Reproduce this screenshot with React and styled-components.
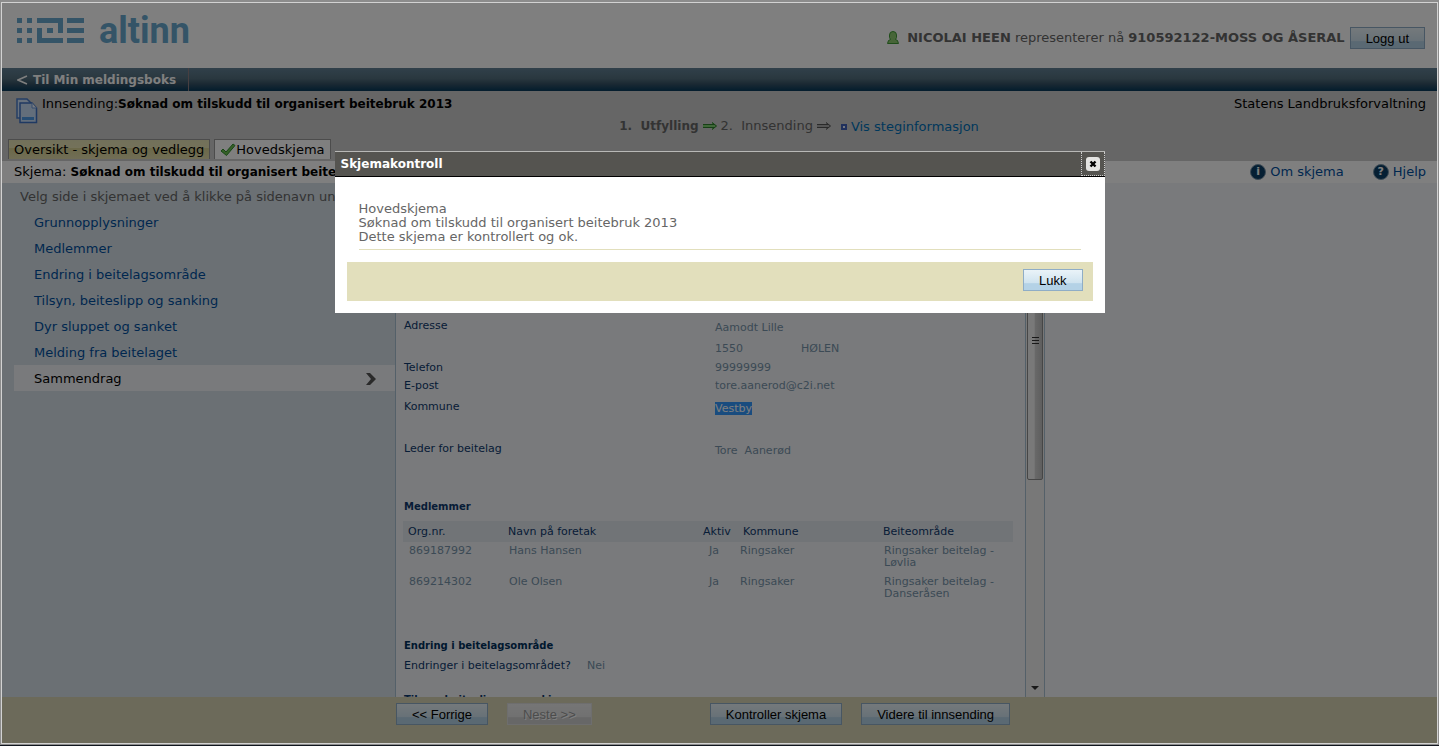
import React from "react";
import styled, { createGlobalStyle, css } from "styled-components";

const GlobalStyle = createGlobalStyle`
  * {
    box-sizing: border-box;
  }

  body {
    margin: 0;
    background: #11161f;
    color: #000;
    font-family: Verdana, "DejaVu Sans", sans-serif;
    font-size: 13px;
    line-height: 16px;
  }

  a {
    color: #004f9f;
    text-decoration: none;
  }

  b {
    font-size: 12px;
  }

  ul, ol, dl, dd, h1, h2, p {
    margin: 0;
    padding: 0;
    list-style: none;
    font-size: inherit;
  }
`;

const Window = styled.div`
  display: flex;
  height: 100vh;
  padding: 2px 1px 1px;
  background: #8c8c8c;
  border-bottom: 1px solid #11161f;
`;

const Page = styled.div`
  position: relative;
  display: flex;
  flex-direction: column;
  flex: 1;
  min-width: 0;
  border: 1px solid #d2d2d2;
  background: #f2f4f8;
`;

const Header = styled.header`
  display: flex;
  align-items: center;
  justify-content: space-between;
  height: 65px;
  padding: 0 12px 0 15px;
  background: #fff;
`;

const Logo = styled.a`
  display: flex;
  align-items: center;
  gap: 14px;
  padding-bottom: 10px;
  color: #68a8cf;
  font: bold 36px/36px Roboto, sans-serif;
`;

const User = styled.div`
  display: flex;
  align-items: center;
  color: #666;
  padding-top: 4px;

  b {
    font-size: 13px;
  }

  svg {
    margin-right: 8px;
  }

  button {
    margin-left: 5px;
  }
`;

const Button = styled.button`
  height: 22px;
  padding: 2px 15px 0;
  border: 1px solid #8fadc6;
  background: linear-gradient(#eaf3f8, #cfe3ef 65%, #b4d2e6 68%, #b4d2e6);
  color: #000;
  font: 13px/18px Arial, "Liberation Sans", sans-serif;
  white-space: nowrap;

  &:disabled {
    border-color: #dcdcdc;
    background: linear-gradient(#ececec, #e2e2e2 65%, #cfcfcf 68%, #cfcfcf);
    color: #999;
    text-shadow: 1px 1px 0 #fff;
  }
`;

const Nav = styled.nav`
  height: 23px;
  flex: none;
  background: linear-gradient(#628195, #54707f 45%, #355266 70%, #0d3d5c 95%);

  a {
    display: inline-flex;
    align-items: center;
    gap: 5px;
    height: 23px;
    padding: 0 12px 0 15px;
    border-right: 1px solid #8f7f83;
    color: #fff;
    font-weight: bold;
    font-size: 12px;
  }
`;

const Banner = styled.div`
  flex: none;
  padding: 5px 11px 2px 6px;
  background: #ccc;
`;

const Heading = styled.div`
  display: flex;
  gap: 4px;
  height: 43px;
  padding-left: 8px;

  > svg {
    flex: none;
    margin-top: 2px;
  }

  > div {
    flex: 1;
  }
`;

const Line = styled.div`
  display: flex;
  justify-content: space-between;
`;

const Steps = styled.ol`
  display: flex;
  align-items: center;
  gap: 3px;
  padding: 4px 0 0 calc(42% - 4px);
  color: #666;

  li {
    display: flex;
    align-items: center;
    gap: 3px;
    white-space: pre;
  }

  a {
    padding-top: 3px;
    color: #0070b8;
  }
`;

const Bullet = styled.span`
  width: 6px;
  height: 6px;
  margin: 3px 1px 0 6px;
  border: 2px solid #4061b8;
  background: #e8eefc;
`;

const Tabs = styled.div`
  display: flex;
  gap: 4px;
`;

const Tab = styled.a`
  display: flex;
  align-items: center;
  height: 20px;
  padding: 0 5px;
  border: 1px solid #999;
  border-bottom: 0;
  background: ${(p) =>
    p.$active ? "#fff" : "linear-gradient(#e4e1b4, #e8e4b4 40%, #d8d293 45%, #e2dcac)"};
  color: #000;
`;

const FormBar = styled.div`
  display: flex;
  flex: none;
  align-items: center;
  justify-content: space-between;
  height: 22px;
  padding: 0 11px 0 12px;
  background: #fff;

  div {
    display: flex;
    gap: 29px;
  }

  a {
    display: flex;
    align-items: center;
    gap: 4px;
  }
`;

const Round = styled.span`
  width: 16px;
  height: 16px;
  border: 1px solid #7b96aa;
  border-radius: 50%;
  background: #0a3e66;
  color: #fff;
  font: bold 11px/14px "DejaVu Sans", sans-serif;
  text-align: center;
`;

const Work = styled.div`
  display: flex;
  flex: 1;
  min-height: 0;
`;

const Sidebar = styled.nav`
  flex: none;
  width: 394px;
  padding: 6px 0 0 12px;
  border-right: 1px solid #a9c0d2;
  background: #d6e1e8;

  p {
    padding: 0 6px 4px;
    color: #666;
  }
`;

const SideLink = styled.a`
  display: flex;
  align-items: center;
  justify-content: space-between;
  height: 26px;
  padding: 2px 18px 0 20px;
  ${(p) =>
    p.$current &&
    css`
      background: #f2f4f8;
      color: #000;
    `};
`;

const Form = styled.main`
  flex: none;
  width: 629px;
  padding: 136px 11px 0 8px;
  overflow: hidden;
  color: #0f3a6e;
  font-size: 11px;
  line-height: 14px;
`;

const Field = styled.div`
  display: flex;
  height: ${(p) => p.$height}px;

  dt {
    width: ${(p) => (p.$short ? 183 : 311)}px;
  }

  dd {
    color: #7894ab;
    padding-top: ${(p) => (p.$low ? 2 : 0)}px;
    white-space: pre;
  }

  mark {
    background: #39f;
    color: #fff;
  }

  span {
    display: inline-block;
    width: 86px;
  }
`;

const Section = styled.h2`
  height: ${(p) => p.$height || 20}px;
  color: ${(p) => (p.$dark ? "#00305c" : "#0f3a6e")};
  font-size: 10px;
`;

const Members = styled.table`
  width: 100%;
  margin: 0 0 35px -1px;
  border-collapse: collapse;
  table-layout: fixed;
  text-align: left;

  th {
    height: 21px;
    padding: 0 5px;
    background: #e3e9ef;
    font-weight: normal;
  }

  td {
    padding: 3px 4px 4px 6px;
    color: #7894ab;
    line-height: 12px;
    vertical-align: top;
  }

  td:nth-child(3) {
    padding-left: 11px;
  }

  td:nth-child(4) {
    padding-left: 2px;
  }
`;

const ScrollBar = styled.div`
  display: flex;
  flex: none;
  flex-direction: column;
  justify-content: space-between;
  align-items: center;
  width: 20px;
  padding: 17px 0 6px;
  border: solid #a9c0d2;
  border-width: 0 1px;
  background: #f0f0f0;
`;

const Thumb = styled.div`
  display: flex;
  align-items: center;
  justify-content: center;
  width: 16px;
  height: 57%;
  border: 1px solid #8c8c8c;
  border-radius: 2px;
  background: linear-gradient(to right, #f2f2f2 45%, #d2d2d2 50%, #bdbdbd);
`;

const Footer = styled.footer`
  display: flex;
  flex: none;
  height: 46px;
  padding: 6px 0 0 394px;
  background: #d8d5b4;

  button + button {
    margin-left: 19px;
  }

  button:nth-child(3) {
    margin-left: 118px;
  }
`;

const Overlay = styled.div`
  position: absolute;
  inset: 0;
  display: flex;
  align-items: flex-start;
  justify-content: center;
  padding-top: 148px;
  background: rgba(0, 0, 0, 0.5);
`;

const Dialog = styled.section`
  width: 770px;
  background: #fff;
`;

const DialogTitle = styled.div`
  display: flex;
  justify-content: space-between;
  height: 26px;
  padding-left: 6px;
  border-top: 1px solid #b8b8b6;
  border-bottom: 1px solid #000;
  background: #555450;
  color: #fff;
  font-size: 12px;
  line-height: 25px;
`;

const Close = styled.button`
  display: flex;
  align-items: center;
  justify-content: center;
  width: 24px;
  height: 24px;
  padding: 0;
  border: 1px dotted #ccc;
  border-top: 0;
  background: none;
`;

const DialogBody = styled.div`
  padding: 25px 12px 12px;
`;

const Message = styled.div`
  margin: 0 12px 12px;
  padding-bottom: 5px;
  border-bottom: 1px solid #e2dfbc;
  color: #666;
  line-height: 14px;
`;

const Actions = styled.div`
  display: flex;
  justify-content: flex-end;
  height: 39px;
  padding: 7px 10px;
  background: #e2dfbc;
`;

const pages = [
  "Grunnopplysninger",
  "Medlemmer",
  "Endring i beitelagsområde",
  "Tilsyn, beiteslipp og sanking",
  "Dyr sluppet og sanket",
  "Melding fra beitelaget",
  "Sammendrag",
];

const members = [
  ["869187992", "Hans Hansen", "Ja", "Ringsaker", "Ringsaker beitelag - Løvlia"],
  ["869214302", "Ole Olsen", "Ja", "Ringsaker", "Ringsaker beitelag - Danseråsen"],
];

const LogoMark = () => (
  <svg width="68" height="26" viewBox="0 0 68 26" fill="currentColor">
    <path d="M0 0h5v5H0zM10 0h5v5h-5zM0 10h5v5H0zM10 10h5v5h-5zM0 20h5v5H0zM10 20h5v5h-5z" />
    <path d="M20 0h26v15h-5V5H20zM20 10h5v10h21v5H20zM30 10h6v5h-6z" />
    <path d="M50 0h17v5H50zM50 10h17v5H50zM50 20h17v5H50z" />
  </svg>
);

const PersonIcon = () => (
  <svg width="12" height="13" viewBox="0 0 12 13">
    <path
      d="M2.5 4a3.500 3.500 0 0 1 7 0v2.500L8.500 8.500l2 1 1 3H.5l1-3 2-1-1-2z"
      fill="#8ecb70"
      stroke="#3f9a35"
    />
  </svg>
);

const BackArrow = () => (
  <svg width="11" height="10" viewBox="0 0 11 10">
    <path d="M10 1L1 5l9 4" fill="none" stroke="#fff" strokeWidth="1.500" />
  </svg>
);

const CopyIcon = () => (
  <svg width="22" height="26" viewBox="0 0 22 26">
    <path d="M1 1h10l4 4v15H1z" fill="#cfe2fa" stroke="#4a7cc9" strokeWidth="1.500" />
    <path d="M4 5h12l4.500 5v14.500H4z" fill="#c6dcf7" stroke="#3f72c4" strokeWidth="1.500" />
    <path d="M16 5v5h4.500" fill="#eef5ff" stroke="#6c97d8" />
    <path d="M6 19h12v3H6z" fill="#4f9be6" />
  </svg>
);

const StepArrow = ({ color, fill }) => (
  <svg width="16" height="10" viewBox="0 0 16 10">
    <path d="M1 3.500h9V1l5 4-5 4V6.500H1z" fill={fill} />
    <path d="M1 3.500h11M1 6.500h11M10 1.500L14.500 5 10 8.500" fill="none" stroke={color} />
  </svg>
);

const CheckIcon = () => (
  <svg width="16" height="14" viewBox="0 0 16 14">
    <path d="M1 8l2-2 3 3 7-8 2 1.500L6.500 12.500z" fill="#6cc04f" stroke="#2f8f2d" />
  </svg>
);

export default function App() {
  return (
    <>
      <GlobalStyle />
      <Window>
        <Page>
          <Header>
            <Logo href="#">
              <LogoMark />
              altinn
            </Logo>
            <User>
              <PersonIcon />
              <span>
                <b>NICOLAI HEEN</b> representerer nå <b>910592122-MOSS OG ÅSERAL</b>
              </span>
              <Button>Logg ut</Button>
            </User>
          </Header>
          <Nav>
            <a href="#">
              <BackArrow />
              Til Min meldingsboks
            </a>
          </Nav>
          <Banner>
            <Heading>
              <CopyIcon />
              <div>
                <Line>
                  <span>
                    Innsending:<b>Søknad om tilskudd til organisert beitebruk 2013</b>
                  </span>
                  <span>Statens Landbruksforvaltning</span>
                </Line>
                <Steps>
                  <li>
                    <b>{"1.  Utfylling"}</b>
                    <StepArrow color="#2f7f2f" fill="#7fd070" />
                  </li>
                  <li>
                    {"2.  Innsending"}
                    <StepArrow color="#555" fill="#aaa" />
                  </li>
                  <li>
                    <Bullet />
                    <a href="#">Vis steginformasjon</a>
                  </li>
                </Steps>
              </div>
            </Heading>
            <Tabs>
              <Tab href="#">Oversikt - skjema og vedlegg</Tab>
              <Tab href="#" $active>
                <CheckIcon />
                Hovedskjema
              </Tab>
            </Tabs>
          </Banner>
          <FormBar>
            <span>
              Skjema: <b>Søknad om tilskudd til organisert beitebruk 2013</b>
            </span>
            <div>
              <a href="#">
                <Round>i</Round>Om skjema
              </a>
              <a href="#">
                <Round>?</Round>Hjelp
              </a>
            </div>
          </FormBar>
          <Work>
            <Sidebar>
              <p>Velg side i skjemaet ved å klikke på sidenavn under</p>
              <ul>
                {pages.map((page) => (
                  <li key={page}>
                    <SideLink href="#" $current={page === "Sammendrag"}>
                      {page}
                      {page === "Sammendrag" && (
                        <svg width="11" height="12" viewBox="0 0 11 12">
                          <path d="M0 0h4l6 6-6 6H0l5-6z" fill="#555" />
                        </svg>
                      )}
                    </SideLink>
                  </li>
                ))}
              </ul>
            </Sidebar>
            <Form>
              <dl>
                <Field $height={23} $low>
                  <dt>Adresse</dt>
                  <dd>Aamodt Lille</dd>
                </Field>
                <Field $height={19}>
                  <dt />
                  <dd>
                    <span>1550</span>HØLEN
                  </dd>
                </Field>
                <Field $height={18}>
                  <dt>Telefon</dt>
                  <dd>99999999</dd>
                </Field>
                <Field $height={21}>
                  <dt>E-post</dt>
                  <dd>tore.aanerod@c2i.net</dd>
                </Field>
                <Field $height={42} $low>
                  <dt>Kommune</dt>
                  <dd>
                    <mark>Vestby</mark>
                  </dd>
                </Field>
                <Field $height={58} $low>
                  <dt>Leder for beitelag</dt>
                  <dd>{"Tore  Aanerød"}</dd>
                </Field>
              </dl>
              <Section $height={21}>Medlemmer</Section>
              <Members>
                <colgroup>
                  <col width="100" />
                  <col width="195" />
                  <col width="40" />
                  <col width="140" />
                  <col />
                </colgroup>
                <thead>
                  <tr>
                    <th>Org.nr.</th>
                    <th>Navn på foretak</th>
                    <th>Aktiv</th>
                    <th>Kommune</th>
                    <th>Beiteområde</th>
                  </tr>
                </thead>
                <tbody>
                  {members.map((row) => (
                    <tr key={row[0]}>
                      {row.map((cell, i) => (
                        <td key={i}>{cell}</td>
                      ))}
                    </tr>
                  ))}
                </tbody>
              </Members>
              <Section $dark>Endring i beitelagsområde</Section>
              <dl>
                <Field $height={34} $short>
                  <dt>Endringer i beitelagsområdet?</dt>
                  <dd>Nei</dd>
                </Field>
              </dl>
              <Section>Tilsyn, beiteslipp og sanking</Section>
            </Form>
            <ScrollBar>
              <Thumb>
                <svg width="7" height="8" viewBox="0 0 7 8">
                  <path d="M0 1.500h7M0 4.500h7M0 7.500h7" stroke="#333" />
                </svg>
              </Thumb>
              <svg width="8" height="5" viewBox="0 0 8 5">
                <path d="M0 0h8L4 4z" fill="#333" />
              </svg>
            </ScrollBar>
          </Work>
          <Footer>
            <Button>&lt;&lt; Forrige</Button>
            <Button disabled>Neste &gt;&gt;</Button>
            <Button>Kontroller skjema</Button>
            <Button>Videre til innsending</Button>
          </Footer>
          <Overlay>
            <Dialog role="dialog" aria-labelledby="dialog-title">
              <DialogTitle>
                <h1 id="dialog-title">Skjemakontroll</h1>
                <Close aria-label="Lukk vindu">
                  <svg width="14" height="14" viewBox="0 0 14 14">
                    <rect width="14" height="14" rx="3" fill="#e4e4e2" />
                    <path d="M4.500 4.500l5 5M9.500 4.500l-5 5" stroke="#000" strokeWidth="2.400" />
                  </svg>
                </Close>
              </DialogTitle>
              <DialogBody>
                <Message>
                  <p>Hovedskjema</p>
                  <p>Søknad om tilskudd til organisert beitebruk 2013</p>
                  <p>Dette skjema er kontrollert og ok.</p>
                </Message>
                <Actions>
                  <Button>Lukk</Button>
                </Actions>
              </DialogBody>
            </Dialog>
          </Overlay>
        </Page>
      </Window>
    </>
  );
}
